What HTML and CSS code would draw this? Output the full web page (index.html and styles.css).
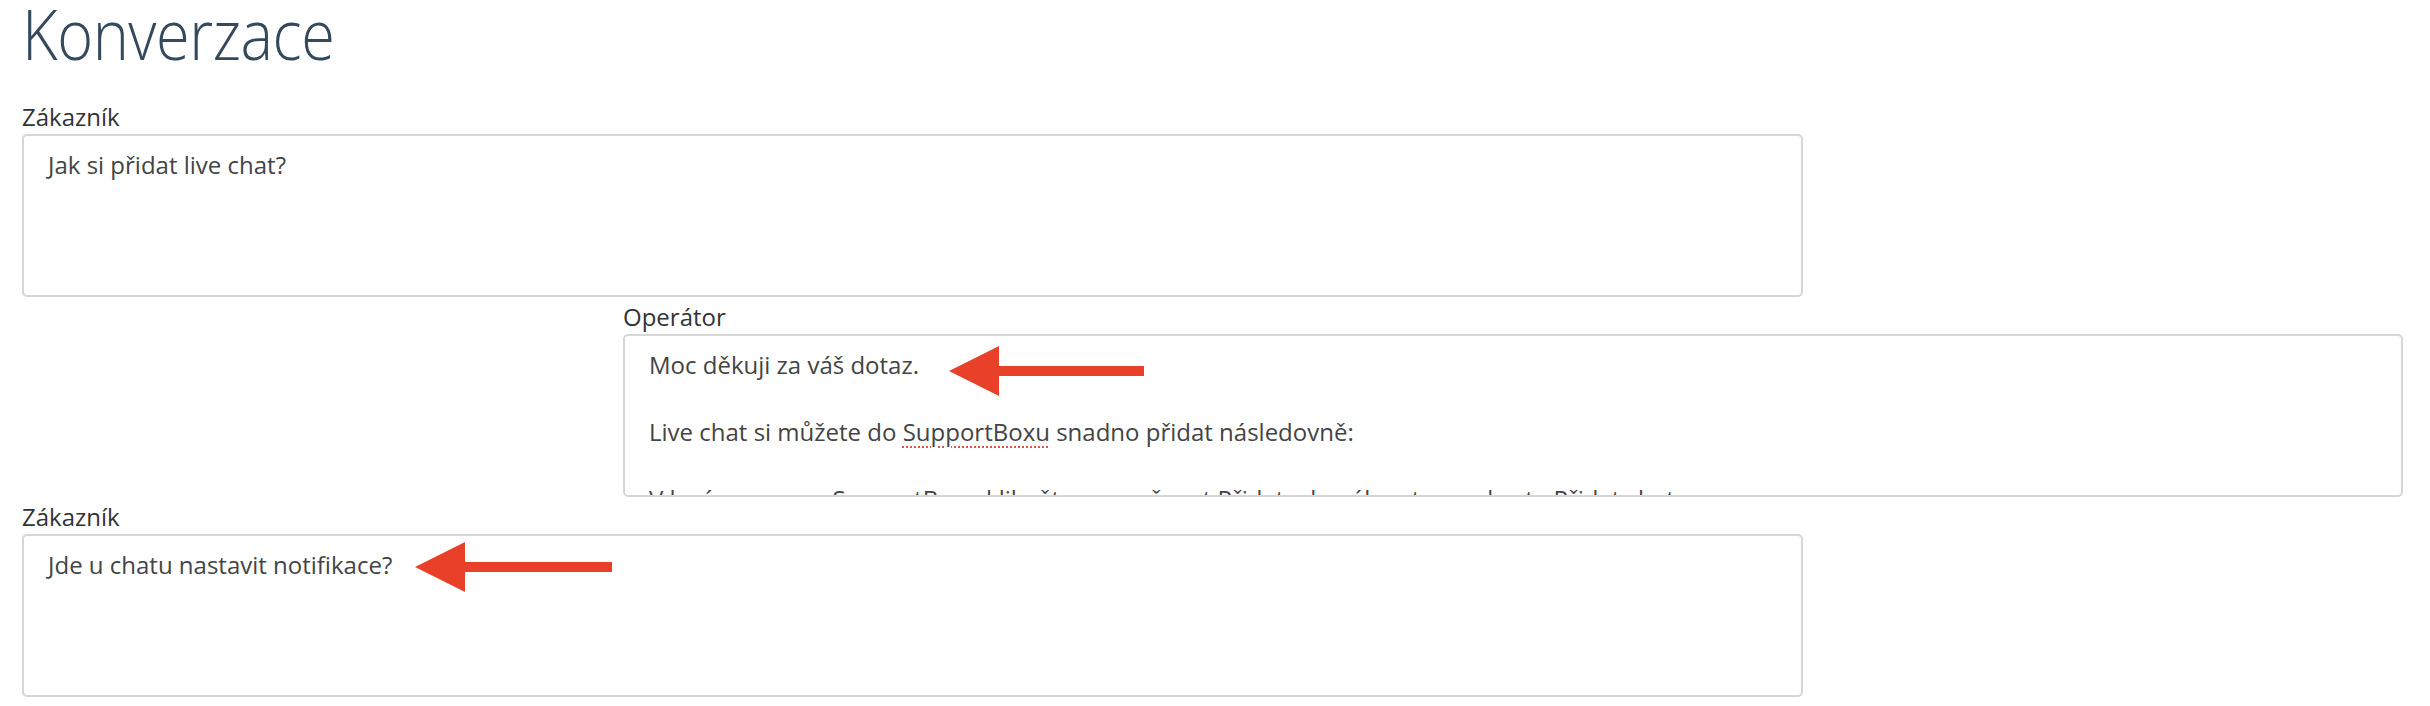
FILE: index.html
```html
<!DOCTYPE html>
<html lang="cs">
<head>
<meta charset="utf-8">
<title>Konverzace</title>
<link rel="stylesheet" href="styles.css">
</head>
<body>
<div class="page">
  <h1 class="title">Konverzace</h1>
  <div class="thread">
    <div class="msg customer">
      <div class="label">Zákazník</div>
      <div class="box">
        <p>Jak si přidat live chat?</p>
      </div>
    </div>
    <div class="msg operator">
      <div class="label">Operátor</div>
      <div class="box">
        <p>Moc děkuji za váš dotaz.</p>
        <p>&nbsp;</p>
        <p>Live chat si můžete do <span class="spell">SupportBoxu</span> snadno přidat následovně:</p>
        <p>&nbsp;</p>
        <p>V levém menu v SupportBoxu klikněte na možnost Přidat a kanál, potom vyberte Přidat chat.</p>
      </div>
      <svg class="arrow arrow-op" width="200" height="52" viewBox="0 0 200 52" aria-hidden="true">
        <polygon points="0,26 50,1 50,21 195,21 195,31 50,31 50,51" fill="#e94129"/>
      </svg>
    </div>
    <div class="msg customer">
      <div class="label">Zákazník</div>
      <div class="box">
        <p>Jde u chatu nastavit notifikace?</p>
      </div>
      <svg class="arrow arrow-cu" width="200" height="52" viewBox="0 0 200 52" aria-hidden="true">
        <polygon points="0,26 50,1 50,21 197,21 197,31 50,31 50,51" fill="#e94129"/>
      </svg>
    </div>
    <div class="msg operator">
      <div class="label">Operátor</div>
      <div class="box">
        <p>Notifikace si můžete nastavit v detailu chatu.</p>
      </div>
    </div>
  </div>
</div>
</body>
</html>
```

FILE: styles.css
```css
html, body {
  margin: 0;
  padding: 0;
  background: #ffffff;
  overflow: hidden;
}

.page {
  padding: 0 27px 0 22px;
  font-family: "Open Sans", "Noto Sans", sans-serif;
  color: #333333;
}

.title {
  margin: 0;
  font-weight: 300;
  font-size: 70px;
  line-height: 66px;
  color: #34495e;
  letter-spacing: -0.5px;
  transform: scaleX(0.875);
  transform-origin: left center;
}

.thread {
  display: flex;
  flex-direction: column;
  padding-top: 34px;
}

.msg {
  position: relative;
  margin-bottom: 3px;
}

.customer {
  width: 1781px;
}

.operator {
  width: 1780px;
  margin-left: 601px;
}

.label {
  font-size: 24px;
  line-height: 34px;
  color: #333333;
}

.box {
  box-sizing: border-box;
  height: 163px;
  border: 2px solid #d6d6d6;
  border-radius: 5px;
  padding: 12px 24px;
  overflow: hidden;
  font-size: 24px;
  line-height: 33.5px;
  color: #444444;
}

.box p {
  margin: 0;
}

.spell {
  text-decoration-line: underline;
  text-decoration-style: dotted;
  text-decoration-color: #e0524a;
  text-decoration-thickness: 2px;
  text-underline-offset: 5px;
}

.arrow {
  position: absolute;
  display: block;
}

.arrow-op {
  left: 326px;
  top: 45px;
}

.arrow-cu {
  left: 393px;
  top: 41px;
}
```
